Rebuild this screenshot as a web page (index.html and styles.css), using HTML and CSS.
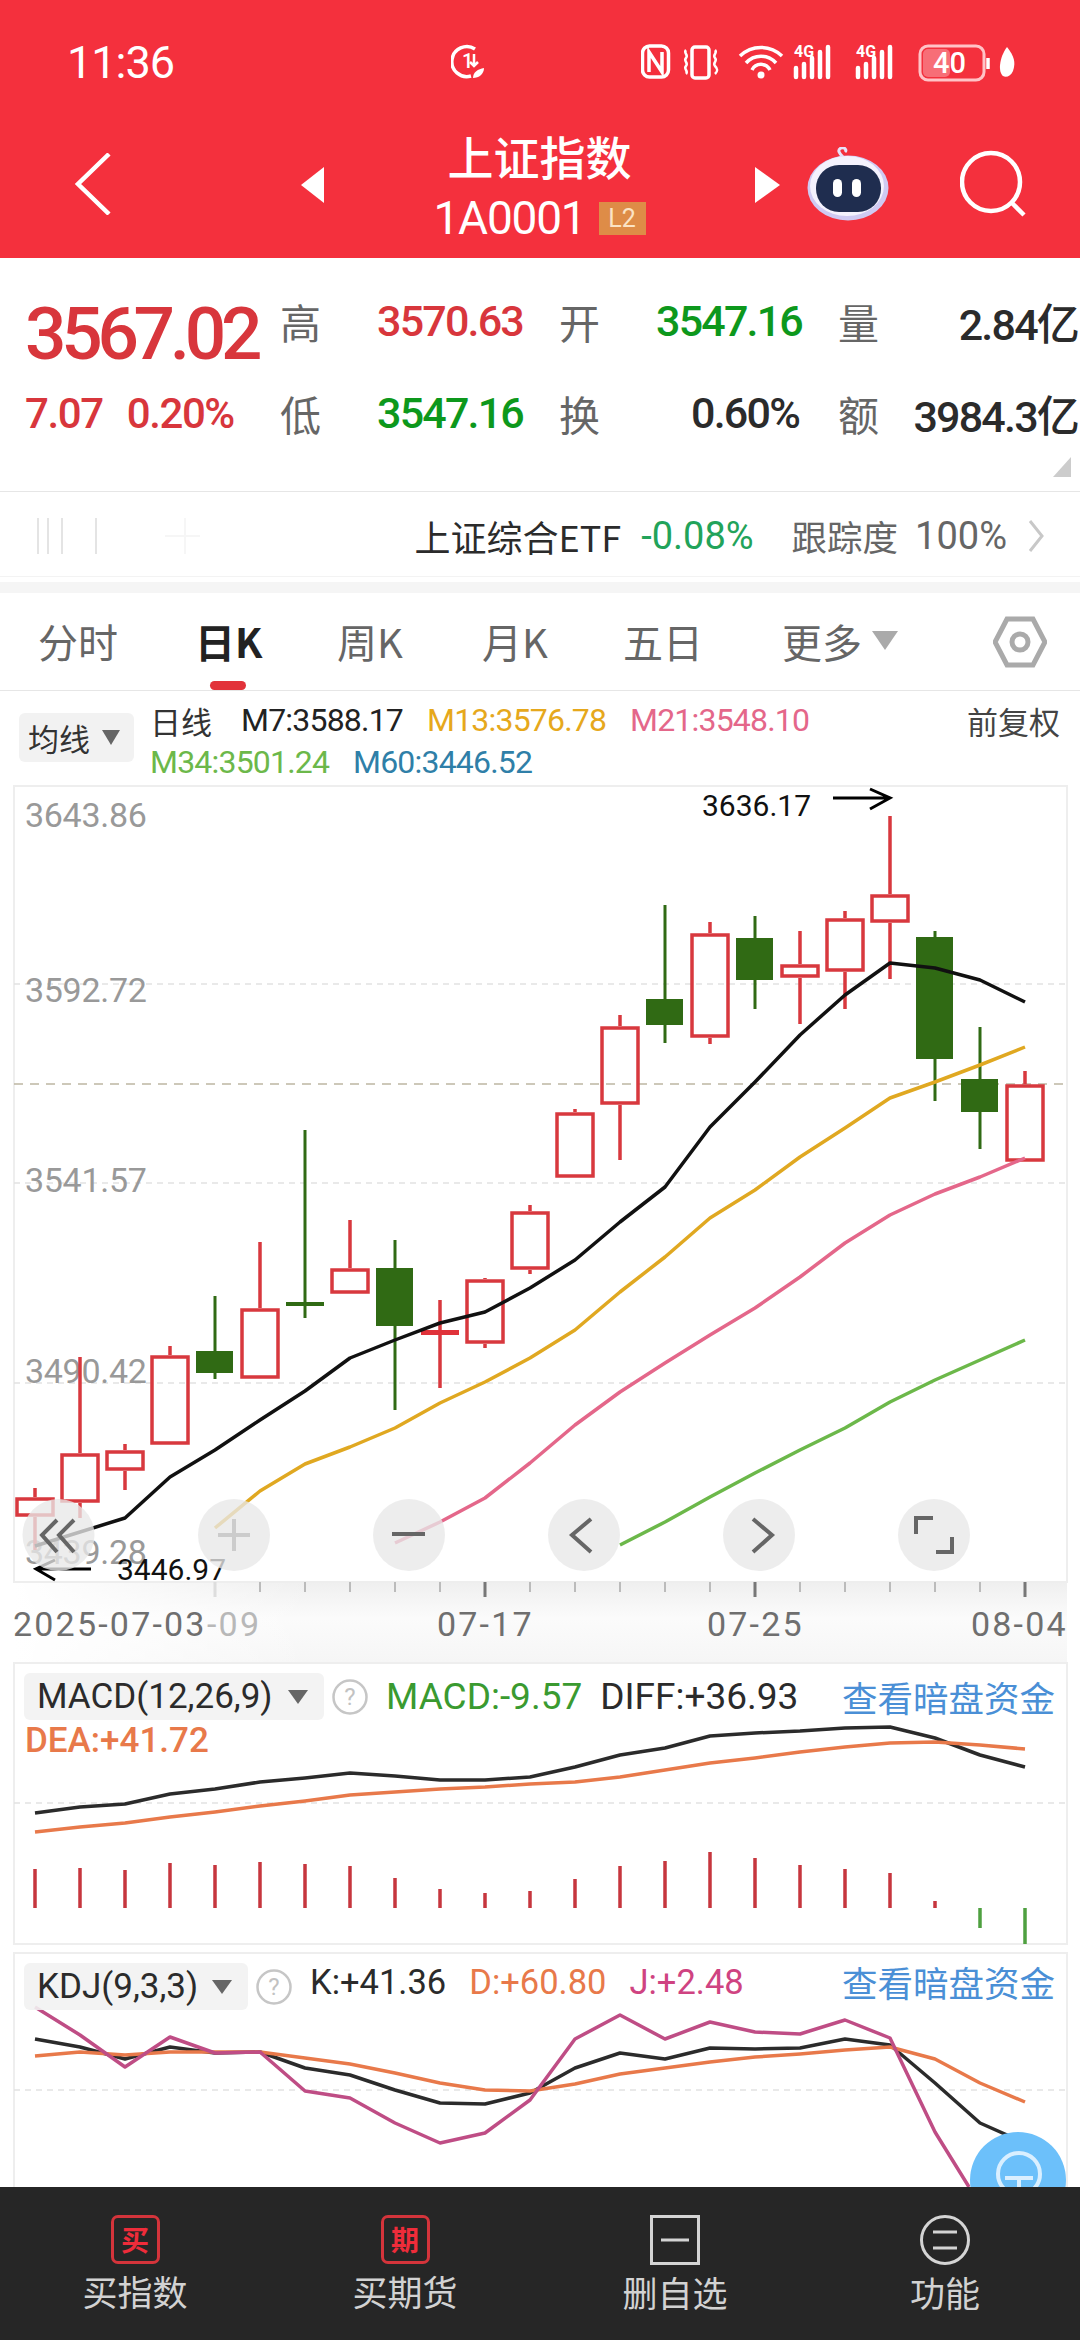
FILE: index.html
```html
<!DOCTYPE html>
<html lang="zh-CN">
<head>
<meta charset="utf-8">
<title>上证指数</title>
<link rel="stylesheet" href="styles.css">
</head>
<body>
<div class="phone">
  <header class="head">
    <div class="status">
      <span class="time">11:36</span>
      <svg class="st-one" width="36" height="36" viewBox="0 0 36 36"><path class="st-line" d="M24 5A15 15 0 1 0 20 32"/><text x="11" y="24" class="st-num">1</text><path class="st-line thin" d="M23 10V22M19 18l4 4 4-4"/><path class="st-fill" d="M22 34C22 28 27 25 33 24 33 30 28 34 22 34Z"/></svg>
      <svg class="st-right" width="380" height="40" viewBox="0 0 380 40">
        <rect x="1.5" y="4" width="26" height="31" rx="7" class="st-line"/>
        <path class="st-line" d="M8 30V10L21 30V10"/>
        <rect x="51" y="5" width="17" height="31" rx="3" class="st-line"/>
        <path class="st-line thin" d="M45 8c-3 3 3 5 0 8s3 5 0 8 3 5 0 8M74 8c3 3-3 5 0 8s-3 5 0 8 3 5 0 8"/>
        <path class="st-line" d="M99 14a30 30 0 0 1 42 0M105 21a20 20 0 0 1 30 0M111 28a10 10 0 0 1 18 0"/>
        <circle cx="120" cy="33" r="3.5" class="st-fill"/>
        <text x="153" y="15" class="st-tiny">4G</text>
        <path class="st-bars" d="M155 26v9M163 22v13M171 16v19M179 10v25M187 5v30"/>
        <text x="215" y="15" class="st-tiny">4G</text>
        <path class="st-bars" d="M217 26v9M225 22v13M233 16v19M241 10v25M249 5v30"/>
        <rect x="279" y="4" width="64" height="34" rx="8" class="st-batt"/>
        <rect x="282" y="7" width="27" height="28" rx="5" class="st-battfill"/>
        <text x="292" y="31" class="st-pct">40</text>
        <path class="st-line" d="M347 16v11"/>
        <path class="st-fill" d="M366 5C373 14 375 20 372 29 370 34 365 36 362 34 357 30 358 16 366 5Z"/>
      </svg>
    </div>
    <div class="bar">
      <svg class="back" width="40" height="62" viewBox="0 0 40 62"><path d="M35 1L4 31 35 61"/></svg>
      <span class="tri tri-l"></span>
      <div class="title">
        <div class="title-name">上证指数</div>
        <div class="title-code"><span>1A0001</span><span class="l2">L2</span></div>
      </div>
      <span class="tri tri-r"></span>
      <svg class="robot" width="82" height="74" viewBox="0 0 82 74">
        <path class="ant" d="M36 10C32 6 30 3 34 1 38 0 40 3 38 5"/>
        <ellipse cx="41" cy="41" rx="40.500" ry="32.500" fill="#cfcaf2"/>
        <ellipse cx="40" cy="39" rx="37" ry="30" fill="#f4f2fd"/>
        <rect x="9" y="18" width="65" height="47" rx="23" fill="#1f2d4f"/>
        <rect x="26" y="32" width="9" height="18" rx="4.500" fill="#fff"/>
        <rect x="45" y="32" width="9" height="18" rx="4.500" fill="#fff"/>
      </svg>
      <svg class="search" width="68" height="68" viewBox="0 0 68 68"><circle cx="31" cy="33" r="29"/><path d="M52 54L64 66"/></svg>
    </div>
  </header>

  <section class="quote">
    <div class="q-price">3567.02</div>
    <div class="q-lab">高</div><div class="q-val red">3570.63</div>
    <div class="q-lab">开</div><div class="q-val green">3547.16</div>
    <div class="q-lab">量</div><div class="q-val end dark">2.84亿</div>
    <div class="q-chg"><span>7.07</span><span>0.20%</span></div>
    <div class="q-lab">低</div><div class="q-val green">3547.16</div>
    <div class="q-lab">换</div><div class="q-val dark">0.60%</div>
    <div class="q-lab">额</div><div class="q-val end dark">3984.3亿</div>
    <span class="corner"></span>
  </section>

  <section class="etf">
    <svg class="etf-blur" width="170" height="40" viewBox="0 0 170 40"><path d="M3 2V38M13 2V38M27 2V38M61 2V38"/><path class="fainter" d="M150 2V38M130 20H165"/></svg>
    <span class="etf-name">上证综合ETF</span>
    <span class="etf-chg">-0.08%</span>
    <span class="etf-lab">跟踪度</span>
    <span class="etf-pct">100%</span>
    <svg class="etf-arrow" width="16" height="32" viewBox="0 0 16 32"><path d="M2 1L14 16 2 31"/></svg>
  </section>
  <div class="band"></div>

  <nav class="tabs">
    <span class="tab">分时</span>
    <span class="tab on">日K</span>
    <span class="tab">周K</span>
    <span class="tab">月K</span>
    <span class="tab">五日</span>
    <span class="tab more">更多<i class="caret big"></i></span>
    <svg class="hex" width="54" height="52" viewBox="0 0 54 52"><path d="M14 3H40L52 26 40 49H14L2 26Z"/><circle cx="27" cy="26" r="8"/></svg>
  </nav>

  <section class="legend">
    <div class="ma-btn"><span>均线</span><i class="caret"></i></div>
    <div class="ma-lines">
      <div class="ma-row"><span class="ma-t">日线</span><span class="k">M7:3588.17</span><span class="m13">M13:3576.78</span><span class="m21">M21:3548.10</span><span class="fq">前复权</span></div>
      <div class="ma-row"><span class="m34">M34:3501.24</span><span class="m60">M60:3446.52</span></div>
    </div>
  </section>

  <svg class="chart main" width="1080" height="877" viewBox="0 785 1080 877">
    <defs>
      <linearGradient id="axis" x1="0" y1="0" x2="0" y2="1"><stop offset="0" stop-color="#efefef"/><stop offset=".45" stop-color="#fbfbfb"/><stop offset="1" stop-color="#f6f6f6"/></linearGradient>
      <linearGradient id="axisfade" x1="0" y1="0" x2="1" y2="0"><stop offset="0" stop-color="#fff"/><stop offset="1" stop-color="#fff" stop-opacity="0"/></linearGradient>
    </defs>
    <rect x="14" y="1582" width="1053" height="80" fill="url(#axis)"/>
    <rect x="14" y="1582" width="300" height="80" fill="url(#axisfade)"/>
    <rect x="14" y="786" width="1053" height="796" class="frame"/>
    <path class="grid" d="M14 984H1067M14 1183H1067M14 1383H1067"/>
    <path class="last" d="M14 1084H1067"/>
    <g class="ylab">
      <text x="25" y="827">3643.86</text><text x="25" y="1002">3592.72</text><text x="25" y="1192">3541.57</text><text x="25" y="1383">3490.42</text><text x="25" y="1564">3439.28</text>
    </g>
    <path class="w-r" d="M35 1488V1497M35 1517V1550M80 1357V1453M80 1503V1518M125 1444V1450M125 1471V1490M170 1346V1355M260 1242V1308M350 1220V1268M440 1300V1388M485 1278V1279M485 1344V1348M530 1205V1211M530 1270V1274M575 1109V1112M620 1015V1026M620 1105V1160M710 922V933M710 1038V1044M800 931V964M800 978V1024M845 911V918M845 972V1009M890 816V894M890 923V979M1025 1071V1084"/>
    <path class="b-r" d="M17 1499H53V1515H17ZM62 1455H98V1501H62ZM107 1452H143V1469H107ZM152 1357H188V1443H152ZM242 1310H278V1377H242ZM332 1270H368V1292H332ZM467 1281H503V1342H467ZM512 1213H548V1268H512ZM557 1114H593V1176H557ZM602 1028H638V1103H602ZM692 935H728V1036H692ZM782 966H818V976H782ZM827 920H863V970H827ZM872 896H908V921H872ZM1007 1086H1043V1160H1007Z"/>
    <rect x="421" y="1330" width="38" height="5" class="f-r"/>
    <path class="w-g" d="M215 1296V1379M305 1130V1318M395 1240V1410M665 905V1043M755 916V1009M935 931V1101M980 1027V1149"/>
    <path class="f-g" d="M196 1351h37v22h-37ZM286 1302h38v4h-38ZM376 1268h37v58h-37ZM646 999h37v26h-37ZM736 938h37v42h-37ZM916 937h37v122h-37ZM961 1079h37v33h-37Z"/>
    <polyline class="ma" stroke="#111" points="35,1546 80,1532 125,1518 170,1477 215,1450 260,1420 305,1391 350,1358 395,1340 440,1323 485,1312 530,1288 575,1260 620,1222 665,1187 710,1127 755,1082 800,1035 845,995 890,963 935,968 980,980 1025,1002"/>
    <polyline class="ma" stroke="#e0a821" points="215,1528 260,1491 305,1464 350,1447 395,1428 440,1403 485,1382 530,1358 575,1330 620,1292 665,1257 710,1218 755,1190 800,1157 845,1128 890,1098 935,1082 980,1065 1025,1047"/>
    <polyline class="ma" stroke="#e4678a" points="395,1543 440,1522 485,1498 530,1463 575,1425 620,1392 665,1363 710,1335 755,1308 800,1277 845,1243 890,1215 935,1194 980,1177 1025,1158"/>
    <polyline class="ma" stroke="#6cb84a" points="620,1545 665,1522 710,1497 755,1473 800,1450 845,1428 890,1402 935,1380 980,1360 1025,1340"/>
    <text x="702" y="816" class="note">3636.17</text>
    <path class="arrow" d="M833 798H890M870 789L890 798 870 809"/>
    <text x="117" y="1580" class="note">3446.97</text>
    <path class="arrow" d="M91 1569H36M55 1560L36 1569 55 1580"/>
    <g class="btn">
      <circle cx="58.500" cy="1535" r="36"/><circle cx="234" cy="1535" r="36"/><circle cx="409" cy="1535" r="36"/><circle cx="584" cy="1535" r="36"/><circle cx="759" cy="1535" r="36"/><circle cx="934" cy="1535" r="36"/>
    </g>
    <path class="ico" d="M57 1520L42 1535 57 1552M74 1520L59 1535 74 1552M392 1534H425M591 1519L572 1535 591 1552M753 1519L772 1535 753 1552M916 1534V1518H933M936 1552H952V1537"/>
    <path class="ico faint" d="M218 1535H250M234 1519V1551"/>
    <path class="tick" d="M260 1582V1592M305 1582V1592M350 1582V1592M395 1582V1592M440 1582V1592M530 1582V1592M575 1582V1592M620 1582V1592M665 1582V1592M710 1582V1592M800 1582V1592M845 1582V1592M890 1582V1592M935 1582V1592M980 1582V1592"/>
    <path class="tick long" d="M485 1582V1597M755 1582V1597M1025 1582V1597"/>
    <path class="tick faint" d="M215 1582V1597"/>
    <g class="date">
      <text x="13" y="1636">2025-07-03</text><text x="207" y="1636" class="fade">-09</text><text x="437" y="1636">07-17</text><text x="707" y="1636">07-25</text><text x="971" y="1636">08-04</text>
    </g>
  </svg>

  <section class="ind">
    <svg class="chart" width="1080" height="290" viewBox="0 1662 1080 290">
      <rect x="14" y="1663" width="1053" height="281" class="frame"/>
      <path class="grid" d="M14 1803H1067"/>
      <polyline class="ln" stroke="#2b2b2b" points="35,1813 80,1807 125,1804 170,1794 215,1789 260,1782 305,1778 350,1773 395,1776 440,1780 485,1780 530,1777 575,1767 620,1755 665,1748 710,1736 755,1733 800,1731 845,1728 890,1727 935,1738 980,1755 1025,1767"/>
      <polyline class="ln" stroke="#e8794a" points="35,1832 80,1827 125,1823 170,1817 215,1812 260,1806 305,1801 350,1795 395,1792 440,1789 485,1787 530,1784 575,1782 620,1777 665,1770 710,1763 755,1758 800,1752 845,1747 890,1743 935,1742 980,1745 1025,1749"/>
      <path class="hist-r" d="M35 1908V1869M80 1908V1868M125 1908V1870M170 1908V1863M215 1908V1865M260 1908V1862M305 1908V1864M350 1908V1866M395 1908V1878M440 1908V1889M485 1908V1893M530 1908V1891M575 1908V1879M620 1908V1866M665 1908V1861M710 1908V1852M755 1908V1858M800 1908V1865M845 1908V1869M890 1908V1873M935 1908V1901"/>
      <path class="hist-g" d="M980 1908V1928M1025 1908V1944"/>
    </svg>
    <div class="ind-head">
      <div class="ind-row">
        <div class="ind-btn w-macd"><span>MACD(12,26,9)</span><i class="caret dark-c"></i></div>
        <svg class="q" width="36" height="36" viewBox="0 0 36 36"><circle cx="18" cy="18" r="16.500"/><text x="18" y="26">?</text></svg>
        <span class="iv wide c-green">MACD:-9.57</span>
        <span class="iv wide c-dark">DIFF:+36.93</span>
        <span class="link">查看暗盘资金</span>
      </div>
      <div class="iv c-orange dea">DEA:+41.72</div>
    </div>
  </section>

  <section class="ind kdj">
    <svg class="chart" width="1080" height="235" viewBox="0 1952 1080 235">
      <rect x="14" y="1953" width="1053" height="240" class="frame"/>
      <path class="grid" d="M14 2090H1067"/>
      <polyline class="ln" stroke="#2b2b2b" points="35,2039 80,2047 125,2059 170,2047 215,2053 260,2052 305,2068 350,2075 395,2090 440,2103 485,2104 530,2093 575,2068 620,2053 665,2059 710,2048 755,2049 800,2048 845,2039 890,2045 935,2083 980,2123 1025,2143"/>
      <polyline class="ln" stroke="#e8794a" points="35,2056 80,2052 125,2055 170,2052 215,2052 260,2052 305,2058 350,2064 395,2073 440,2083 485,2090 530,2091 575,2084 620,2074 665,2068 710,2062 755,2057 800,2054 845,2050 890,2047 935,2059 980,2083 1025,2102"/>
      <polyline class="ln" stroke="#bf4d85" points="35,2007 80,2035 125,2067 170,2037 215,2053 260,2052 305,2091 350,2098 395,2123 440,2143 485,2133 530,2100 575,2039 620,2015 665,2039 710,2022 755,2032 800,2034 845,2020 890,2038 935,2132 969,2187"/>
      <circle cx="1018" cy="2180" r="48" class="fab"/>
      <circle cx="1019" cy="2174" r="21" class="fab-i"/>
      <path class="fab-i" d="M1005 2178H1033M1019 2178V2187"/>
    </svg>
    <div class="ind-head">
      <div class="ind-row">
        <div class="ind-btn w-kdj"><span>KDJ(9,3,3)</span><i class="caret dark-c"></i></div>
        <svg class="q" width="36" height="36" viewBox="0 0 36 36"><circle cx="18" cy="18" r="16.500"/><text x="18" y="26">?</text></svg>
        <span class="iv up c-dark">K:+41.36</span>
        <span class="iv up c-orange">D:+60.80</span>
        <span class="iv up c-pink">J:+2.48</span>
        <span class="link up">查看暗盘资金</span>
      </div>
    </div>
  </section>

  <footer class="foot">
    <div class="f-item"><span class="f-box">买</span><span class="f-lab">买指数</span></div>
    <div class="f-item"><span class="f-box">期</span><span class="f-lab">买期货</span></div>
    <div class="f-item">
      <svg class="f-ico" width="50" height="50" viewBox="0 0 50 50"><rect x="1.500" y="1.500" width="47" height="47"/><path d="M11 25H39"/></svg>
      <span class="f-lab">删自选</span>
    </div>
    <div class="f-item">
      <svg class="f-ico" width="50" height="50" viewBox="0 0 50 50"><circle cx="25" cy="25" r="23.500"/><path d="M13 17H37M13 33H37"/></svg>
      <span class="f-lab">功能</span>
    </div>
  </footer>
</div>
</body>
</html>
```
FILE: styles.css
```css
* { box-sizing: border-box; }
html, body { margin: 0; padding: 0; background: #fff; }
body { font-family: Roboto, "Noto Sans CJK SC", sans-serif; }
.phone { width: 1080px; height: 2340px; overflow: hidden; display: flex; flex-direction: column; position: relative; background: #fff; }

/* header */
.head { height: 258px; background: #f4303d; color: #fff; display: flex; flex-direction: column; flex: none; }
.status { height: 124px; display: flex; align-items: center; padding-left: 67px; }
.time { font-size: 45px; width: 384px; letter-spacing: -1px; }
.st-right { margin-left: 154px; }
.st-line { fill: none; stroke: #fff; stroke-width: 3.5; }
.st-line.thin { stroke-width: 2.5; }
.st-fill { fill: #fff; }
.st-num { fill: #fff; font: 500 20px Roboto, sans-serif; }
.st-tiny { fill: #fff; font: 700 16px Roboto, sans-serif; }
.st-bars { stroke: #fff; stroke-width: 4.5; stroke-linecap: round; fill: none; }
.st-batt { fill: none; stroke: #ffc3c7; stroke-width: 3; }
.st-battfill { fill: rgba(255,255,255,.3); }
.st-pct { fill: #fff; font: 500 29px Roboto, sans-serif; }
.bar { height: 134px; display: flex; align-items: center; padding-left: 74px; position: relative; }
.back path { fill: none; stroke: #fff; stroke-width: 4.5; }
.back { margin-right: 187px; margin-top: -14px; }
.tri { width: 0; height: 0; border-style: solid; border-color: transparent; }
.tri-l { border-width: 18px 23px 18px 0; border-right-color: #fff; margin-top: -12px; }
.tri-r { border-width: 18px 0 18px 25px; border-left-color: #fff; margin-top: -12px; }
.title { width: 431px; display: flex; flex-direction: column; align-items: center; margin-top: -10px; }
.title-name { font: 500 46px/50px "Noto Sans CJK SC", sans-serif; margin-top: -3px; }
.title-code { display: flex; align-items: center; gap: 13px; margin-top: 17px; margin-left: 0; font-size: 46px; line-height: 42px; letter-spacing: -1.200px; }
.l2 { width: 47px; height: 33px; background: #de8c47; color: #fbe3c4; font-size: 25px; line-height: 33px; text-align: center; letter-spacing: 0; }
.robot { margin-left: 27px; margin-top: -14px; }
.ant { fill: none; stroke: #e6e2fa; stroke-width: 3; }
.search { margin-left: 71px; margin-top: -16px; }
.search circle, .search path { fill: none; stroke: #fff; stroke-width: 4.5; }

/* quote */
.quote { height: 233px; flex: none; position: relative; display: grid; padding: 17px 0 0 26px; grid-template-columns: 255px 96px 183px 96px 183px 60px 179px; grid-template-rows: 92px 92px; align-items: center; }
.q-price { font-size: 73px; font-weight: 500; color: #d8363c; letter-spacing: -5.300px; padding-top: 25px; line-height: 80px; margin-left: -1px; }
.q-lab { font: 400 41px "Noto Sans CJK SC", sans-serif; color: #666; margin-left: -1px; }
.q-val { font-size: 43px; font-weight: 500; width: 143px; text-align: right; white-space: nowrap; letter-spacing: -1.800px; }
.q-val.end { width: 179px; font-family: Roboto, "Noto Sans CJK SC", sans-serif; }
.red { color: #d8363c; } .green { color: #0d981c; } .dark { color: #2b2b2b; }
.q-chg { display: flex; gap: 24px; font-size: 42px; font-weight: 500; color: #d8363c; letter-spacing: -1.400px; margin-left: -1px; }
.corner { position: absolute; right: 9px; top: 199px; width: 0; height: 0; border-style: solid; border-width: 0 0 20px 18px; border-color: transparent transparent #ccc transparent; }

/* etf */
.etf { height: 86px; flex: none; border-top: 1px solid #e6e6e6; border-bottom: 1px solid #f3f3f3; display: flex; align-items: center; padding: 3px 36px 0 0; font-size: 38px; }
.etf-blur { margin-left: 35px; margin-right: auto; }
.etf-blur path { stroke: #e4e4e4; stroke-width: 2; fill: none; }
.etf-blur .fainter { stroke: #f6f6f6; }
.etf-name { font: 400 36px "Noto Sans CJK SC", sans-serif; color: #2b2b2b; }
.etf-chg { color: #22a35a; margin-left: 20px; }
.etf-lab { font: 400 35.500px "Noto Sans CJK SC", sans-serif; color: #666; margin-left: 38px; }
.etf-pct { color: #666; margin-left: 17px; }
.etf-arrow { margin-left: 21px; }
.etf-arrow path { fill: none; stroke: #c8c8c8; stroke-width: 3; }
.band { height: 16px; flex: none; border-top: 5px solid #fff; background: #f5f5f5; }

/* tabs */
.tabs { height: 98px; flex: none; border-bottom: 1px solid #e6e6e6; display: grid; grid-template-columns: 160px 139px 145px 141px 159px 208px 1fr; padding-left: 38px; align-items: center; position: relative; font: 400 40px "Noto Sans CJK SC", sans-serif; color: #666; }
.tab { position: relative; white-space: nowrap; display: flex; align-items: center; height: 97px; margin-top: -2px; }
.tab.on { font-weight: 700; color: #222; margin-left: -3px; }
.tab.on::after { content: ""; position: absolute; left: 15px; bottom: -1px; width: 36px; height: 9px; border-radius: 5px; background: #e2323a; }
.caret { display: inline-block; width: 0; height: 0; border-style: solid; border-width: 15px 9px 0 9px; border-color: #666 transparent transparent transparent; }
.caret.big { border-width: 19px 13px 0 13px; border-top-color: #aaa; margin-left: 10px; }
.caret.dark-c { border-width: 14px 10px 0 10px; border-top-color: #666; }
.hex { margin-left: 3px; }
.hex path, .hex circle { fill: none; stroke: #aaa; stroke-width: 5; }

/* legend */
.legend { height: 94px; flex: none; display: flex; padding-left: 19px; font-size: 32px; letter-spacing: -.8px; }
.ma-btn { width: 115px; height: 49px; margin-top: 22px; margin-right: 16px; background: #f2f2f2; border-radius: 6px; display: flex; align-items: center; gap: 12px; padding-left: 9px; font: 400 31px "Noto Sans CJK SC", sans-serif; color: #333; letter-spacing: 0; }
.ma-lines { flex: 1; padding-top: 8px; }
.ma-row { height: 42px; display: flex; align-items: center; white-space: nowrap; }
.ma-t { font-family: "Noto Sans CJK SC", sans-serif; font-size: 31px; color: #333; width: 91px; letter-spacing: 0; }
.k { color: #222; width: 186px; }
.m13 { color: #e6a81c; width: 203px; }
.m21 { color: #e4678a; }
.fq { margin-left: auto; margin-right: 20px; font-family: "Noto Sans CJK SC", sans-serif; color: #444; font-size: 31px; letter-spacing: 0; }
.m34 { color: #6cb84a; width: 203px; }
.m60 { color: #2f7fa8; }

/* charts */
.chart { display: block; flex: none; }
.frame { fill: none; stroke: #eeeeee; stroke-width: 2; }
.grid { stroke: #e2e2e2; stroke-width: 1.5; stroke-dasharray: 6 5; fill: none; }
.last { stroke: #bdb6a3; stroke-width: 1.5; stroke-dasharray: 9 7; fill: none; }
.ylab text { font: 400 34px Roboto, sans-serif; fill: #999; letter-spacing: -.3px; }
.w-r { stroke: #d8383e; stroke-width: 3.5; fill: none; }
.b-r { stroke: #d8383e; stroke-width: 3.5; fill: none; }
.f-r { fill: #e0323a; }
.w-g { stroke: #306a14; stroke-width: 3; fill: none; }
.f-g { fill: #306a14; }
.ma { fill: none; stroke-width: 3.5; stroke-linejoin: round; }
.ln { fill: none; stroke-width: 3.5; stroke-linejoin: round; }
.hist-r { stroke: #c6363e; stroke-width: 3.5; fill: none; }
.hist-g { stroke: #4fa040; stroke-width: 3.5; fill: none; }
.note { font: 400 30px Roboto, sans-serif; fill: #111; }
.arrow { fill: none; stroke: #000; stroke-width: 3; }
.btn circle { fill: rgba(232,232,232,.78); }
.ico { fill: none; stroke: #666; stroke-width: 4; }
.ico.faint { stroke: #ccc; }
.tick { stroke: #bbb; stroke-width: 2; fill: none; }
.tick.long { stroke: #777; stroke-width: 3; }
.tick.faint { stroke: #ddd; stroke-width: 3; }
.date text { font: 400 34px Roboto, sans-serif; fill: #6f6f6f; letter-spacing: 2.2px; }
.date text.fade { fill: #b8b8b8; }

/* indicators */
.ind { height: 290px; flex: none; position: relative; }
.ind.kdj { height: 235px; }
.ind-head { position: absolute; left: 24px; top: 11px; width: 1031px; }
.ind-row { display: flex; align-items: center; height: 47px; white-space: nowrap; }
.ind-btn { height: 47px; background: rgba(242,242,242,.9); border-radius: 6px; display: flex; align-items: center; padding-left: 13px; font-size: 35px; color: #2b2b2b; justify-content: space-between; padding-right: 16px; }
.w-macd { width: 300px; }
.w-kdj { width: 224px; }
.q { margin-left: 8px; margin-right: 18px; flex: none; }
.q circle { fill: none; stroke: #c6c6c6; stroke-width: 2.5; }
.q text { font: 400 24px Roboto, sans-serif; fill: #c2c2c2; text-anchor: middle; }
.iv { font-size: 34.500px; margin-right: 23px; }
.iv.wide { font-size: 37px; margin-right: 18px; }
.iv.up, .link.up { position: relative; top: -5px; }
.c-green { color: #3a9a30; }
.c-dark { color: #2b2b2b; }
.c-orange { color: #e8794a; }
.c-pink { color: #cf4381; }
.link { margin-left: auto; font: 400 35.500px "Noto Sans CJK SC", sans-serif; color: #4a8fd6; }
.dea { margin: 0 0 0 1px; line-height: 42px; font-weight: 500; font-size: 35px; }
.fab { fill: #6cc0fa; }
.fab-i { fill: none; stroke: #d9efff; stroke-width: 4; }

/* footer */
.foot { height: 153px; flex: none; background: #262626; display: grid; grid-template-columns: repeat(4, 270px); position: relative; }
.f-item { display: flex; flex-direction: column; align-items: center; padding-top: 28px; }
.f-box { width: 49px; height: 49px; border: 3px solid #d4343b; border-radius: 7px; color: #ef2c3a; font: 700 28px/42px "Noto Sans CJK SC", sans-serif; text-align: center; }
.f-ico { flex: none; }
.f-ico rect, .f-ico circle, .f-ico path { fill: none; stroke: #d4d4d4; stroke-width: 3; }
.f-lab { margin-top: 4px; font: 400 35px/46px "Noto Sans CJK SC", sans-serif; color: #d2d2d2; }
```
